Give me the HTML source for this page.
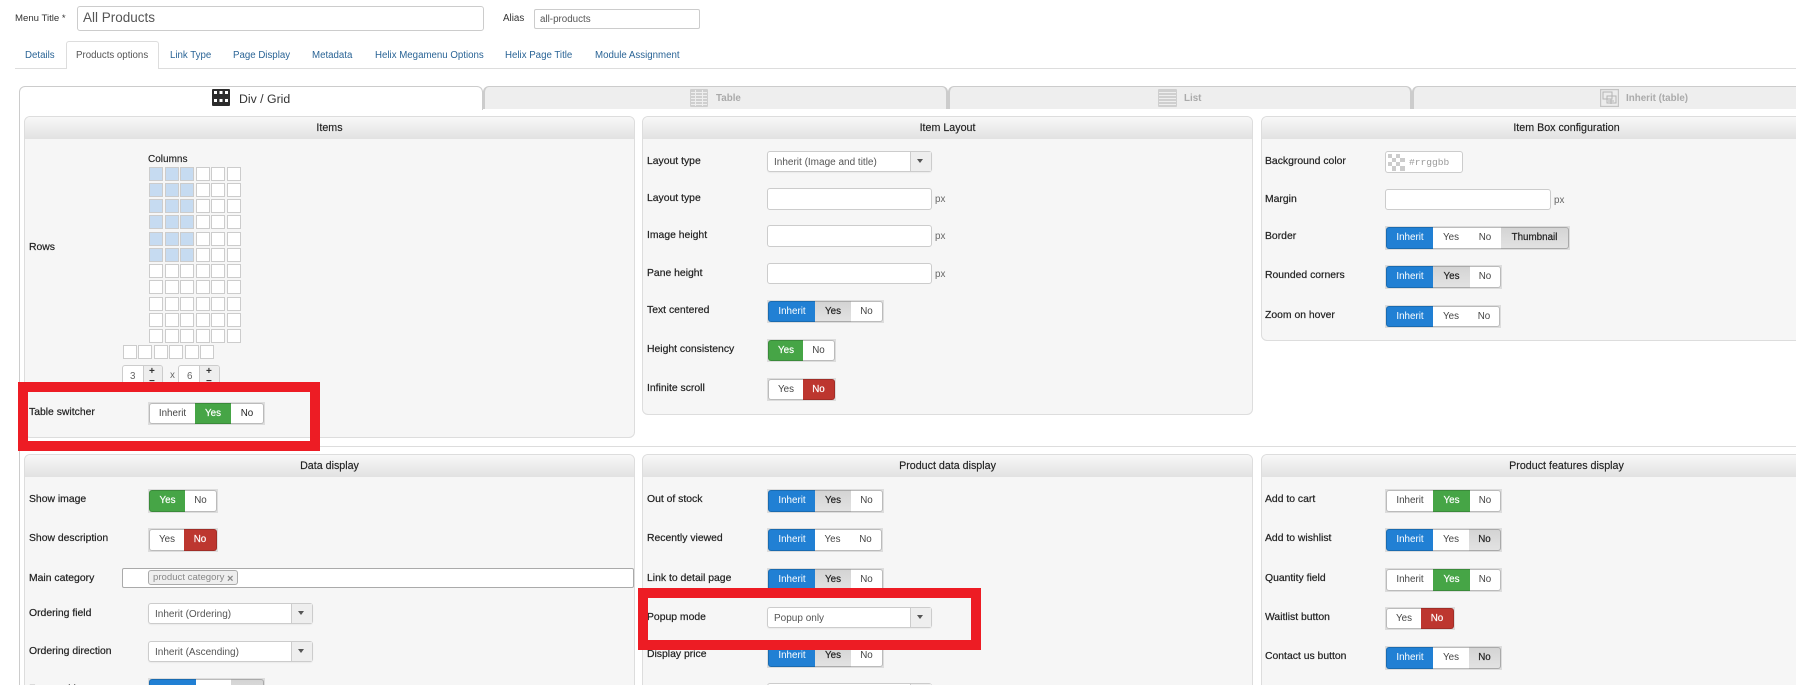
<!DOCTYPE html>
<html>
<head>
<meta charset="utf-8">
<title>All Products</title>
<style>
html,body{margin:0;padding:0;background:#fff;width:1796px;height:685px;overflow:hidden}
body{position:relative;font-family:"Liberation Sans",Arial,sans-serif;color:#333}
div,p,span,i,b{box-sizing:border-box}
.a{position:absolute}
.txt{position:absolute;white-space:nowrap;line-height:14px;font-size:9.8px;margin-top:1px}
.tab{position:absolute;top:49px;white-space:nowrap;line-height:14px;font-size:9.7px;color:#2a6496}
.it{position:absolute;top:86px;height:23px;background:#eee;border:1px solid #ccc;border-bottom:0;border-width:1px 2px 0 2px;border-radius:6px 6px 0 0}
.tt{position:absolute;top:92px;font-size:9.8px;font-weight:bold;color:#aaa;line-height:14px;white-space:nowrap}
.p{position:absolute;background:#f6f6f6;border:1px solid #ddd;border-radius:6px;overflow:hidden}
.h{height:22px;line-height:23px;text-align:center;font-size:10.7px;color:#222;background:linear-gradient(#f8f8f8,#e2e2e2);-webkit-text-stroke:.15px #222;white-space:nowrap}
.l{position:absolute;margin:1px 0 0;white-space:nowrap;font-size:10.4px;line-height:14px;color:#222;-webkit-text-stroke:.2px #222}
.c1{left:29px}.c2{left:647px}.c3{left:1265px}
.t{position:absolute;display:flex;height:23px;padding:1px;background:#ddd}
.t i{display:block;font-style:normal;height:21px;line-height:20px;text-align:center;font-size:9.8px;border:1px solid #bbb;border-left-width:0;border-right-width:0;white-space:nowrap}
.t i:first-child{border-left-width:1px;border-radius:3px 0 0 3px}
.t i:last-child{border-right-width:1px;border-radius:0 3px 3px 0}
.w{background:#fff;color:#444}
.bl{background:#2180d4;color:#fff;border-color:#1a6bb0!important}
.gr{background:#46a546;color:#fff;border-color:#3a8a3a!important;-webkit-text-stroke:.2px #fff}
.rd{background:#bd362f;color:#fff;border-color:#a02d27!important;-webkit-text-stroke:.2px #fff}
.gy{background:linear-gradient(#d4d4d4,#e2e2e2);color:#222;border-color:#aaa!important;-webkit-text-stroke:.2px #222}
.s{position:absolute;height:21px;background:#fff;border:1px solid #ccc;border-radius:3px;box-shadow:0 1px 1px rgba(0,0,0,.05);font-size:10px;line-height:21px;padding-left:6px;color:#555;white-space:nowrap}
.s span{position:absolute;right:0;top:0;width:21px;height:19px;background:#eee;border-left:1px solid #ccc}
.s span:after{content:"";position:absolute;left:6px;top:7px;border:3px solid transparent;border-top:4px solid #555;border-bottom:0}
.in{position:absolute;background:#fff;border:1px solid #ccc;border-radius:3px;height:21px}
.px{position:absolute;font-size:9.8px;color:#666;line-height:14px;margin-top:2px}
.red{position:absolute;border:10px solid #ed1c24;z-index:5}
</style>
</head>
<body>

<!-- top -->
<div class="txt" style="left:15px;top:11px;font-size:9.6px;color:#333">Menu Title *</div>
<div class="a" style="left:77px;top:6px;width:407px;height:25px;background:#fff;border:1px solid #ccc;border-radius:3px;padding-left:5px;font-size:13.5px;line-height:22px;color:#555">All Products</div>
<div class="txt" style="left:503px;top:11px;color:#333">Alias</div>
<div class="a" style="left:534px;top:9px;width:166px;height:20px;background:#fff;border:1px solid #ccc;border-radius:2px;padding-left:5px;font-size:9.8px;line-height:19px;color:#555">all-products</div>

<!-- tabs -->
<div class="a" style="left:15px;top:68px;width:1781px;height:1px;background:#ddd"></div>
<div class="a" style="left:66px;top:41px;width:93px;height:28px;background:#fff;border:1px solid #ddd;border-bottom:0;border-radius:3px 3px 0 0"></div>
<div class="tab" style="left:25px">Details</div>
<div class="tab" style="left:76px;color:#555">Products options</div>
<div class="tab" style="left:170px">Link Type</div>
<div class="tab" style="left:233px">Page Display</div>
<div class="tab" style="left:312px">Metadata</div>
<div class="tab" style="left:375px">Helix Megamenu Options</div>
<div class="tab" style="left:505px">Helix Page Title</div>
<div class="tab" style="left:595px">Module Assignment</div>

<!-- inner tabs -->
<div class="a" style="left:19px;top:109px;width:1px;height:576px;background:#ccc"></div>
<div class="a" style="left:19px;top:86px;width:464px;height:24px;background:#fff;border:1px solid #ccc;border-bottom:0;border-radius:6px 6px 0 0;z-index:1"></div>
<div class="it" style="left:483px;width:465px"></div>
<div class="it" style="left:948px;width:464px"></div>
<div class="it" style="left:1412px;width:400px"></div>

<svg class="a" style="left:212px;top:89px;z-index:2" width="18" height="17" viewBox="0 0 18 17">
<rect width="18" height="17" rx="1" fill="#2c2c2c"/>
<g fill="#fff"><rect x="2" y="2" width="3" height="3"/><rect x="7.5" y="2" width="3" height="3"/><rect x="13" y="2" width="3" height="3"/><rect x="2" y="10" width="3" height="3"/><rect x="7.5" y="10" width="3" height="3"/><rect x="13" y="10" width="3" height="3"/></g>
</svg>
<div class="txt" style="left:239px;top:91px;font-size:12.3px;color:#333;z-index:2">Div / Grid</div>

<svg class="a" style="left:690px;top:89px" width="18" height="18" viewBox="0 0 18 18">
<rect width="18" height="18" rx="1" fill="#cfcfcf"/>
<g fill="#eee"><rect x="1" y="3" width="16" height="1"/><rect x="1" y="6" width="16" height="1"/><rect x="1" y="9" width="16" height="1"/><rect x="1" y="12" width="16" height="1"/><rect x="1" y="15" width="16" height="1"/><rect x="5" y="1" width="1" height="16"/><rect x="12" y="1" width="1" height="16"/></g>
</svg>
<div class="tt" style="left:716px">Table</div>

<svg class="a" style="left:1158px;top:89px" width="19" height="18" viewBox="0 0 19 18">
<rect width="19" height="18" rx="1" fill="#cfcfcf"/>
<g fill="#eee"><rect x="1" y="3" width="17" height="1"/><rect x="1" y="6" width="17" height="1"/><rect x="1" y="9" width="17" height="1"/><rect x="1" y="12" width="17" height="1"/><rect x="1" y="15" width="17" height="1"/></g>
</svg>
<div class="tt" style="left:1184px">List</div>

<svg class="a" style="left:1600px;top:89px" width="19" height="18" viewBox="0 0 19 18">
<rect x=".5" y=".5" width="18" height="17" fill="#ececec" stroke="#c4c4c4" stroke-width="1.4"/>
<rect x="3" y="3" width="9" height="7" fill="none" stroke="#b4b4b4"/>
<rect x="7" y="7" width="9" height="7" fill="none" stroke="#b4b4b4"/>
<path d="M8 12h6M11 10v5" stroke="#b4b4b4" fill="none"/>
</svg>
<div class="tt" style="left:1626px">Inherit (table)</div>

<!-- panels row 1 -->
<div class="p" style="left:24px;top:116px;width:611px;height:322px"><div class="h">Items</div></div>
<div class="p" style="left:642px;top:116px;width:611px;height:299px"><div class="h">Item Layout</div></div>
<div class="p" style="left:1261px;top:116px;width:611px;height:225px"><div class="h">Item Box configuration</div></div>

<!-- hr -->
<div class="a" style="left:20px;top:446px;width:1776px;height:1px;background:#ddd"></div>

<!-- panels row 2 -->
<div class="p" style="left:24px;top:454px;width:611px;height:260px"><div class="h">Data display</div></div>
<div class="p" style="left:642px;top:454px;width:611px;height:260px"><div class="h">Product data display</div></div>
<div class="p" style="left:1261px;top:454px;width:611px;height:260px"><div class="h">Product features display</div></div>

<!-- Items -->
<div class="txt" style="left:148px;top:152px;font-size:10px;color:#222;-webkit-text-stroke:.15px #222">Columns</div>
<p class="l c1" style="top:240px">Rows</p>
<svg class="a" style="left:120px;top:160px" width="125" height="202" viewBox="120 160 125 202">
<defs>
<g id="ra" stroke="#ccc"><g fill="#c6dbf1"><rect x="149.5" y=".5" width="13" height="13"/><rect x="165.5" y=".5" width="13" height="13"/><rect x="180.5" y=".5" width="13" height="13"/></g><g fill="#fff"><rect x="196.5" y=".5" width="13" height="13"/><rect x="211.5" y=".5" width="13" height="13"/><rect x="227.5" y=".5" width="13" height="13"/></g></g>
<g id="rb" stroke="#ccc" fill="#fff"><rect x="149.5" y=".5" width="13" height="13"/><rect x="165.5" y=".5" width="13" height="13"/><rect x="180.5" y=".5" width="13" height="13"/><rect x="196.5" y=".5" width="13" height="13"/><rect x="211.5" y=".5" width="13" height="13"/><rect x="227.5" y=".5" width="13" height="13"/></g>
</defs>
<use href="#ra" y="167"/><use href="#ra" y="183"/><use href="#ra" y="199"/><use href="#ra" y="215"/><use href="#ra" y="232"/><use href="#ra" y="248"/>
<use href="#rb" y="264"/><use href="#rb" y="280"/><use href="#rb" y="297"/><use href="#rb" y="313"/><use href="#rb" y="329"/>
<g stroke="#ccc" fill="#fff"><rect x="123.5" y="345.5" width="13" height="13"/><rect x="138.5" y="345.5" width="13" height="13"/><rect x="154.5" y="345.5" width="13" height="13"/><rect x="169.5" y="345.5" width="13" height="13"/><rect x="185.5" y="345.5" width="13" height="13"/><rect x="200.5" y="345.5" width="13" height="13"/></g>
</svg>

<div class="a" style="left:122px;top:365px;width:41px;height:22px;background:#fff;border:1px solid #ccc;border-radius:3px;overflow:hidden">
<div class="a" style="left:20px;top:0;width:20px;height:22px;background:#eee;border-left:1px solid #ccc"></div>
<div class="txt" style="left:7px;top:3px;color:#666">3</div>
<div class="txt" style="left:26px;top:-2px;font-size:10px;font-weight:bold;color:#333">+</div>
<div class="txt" style="left:26px;top:8px;font-size:10px;font-weight:bold;color:#333">−</div>
</div>
<div class="txt" style="left:170px;top:368px;color:#666">x</div>
<div class="a" style="left:178px;top:365px;width:42px;height:22px;background:#fff;border:1px solid #ccc;border-radius:3px;overflow:hidden">
<div class="a" style="left:20px;top:0;width:21px;height:22px;background:#eee;border-left:1px solid #ccc"></div>
<div class="txt" style="left:8px;top:3px;color:#666">6</div>
<div class="txt" style="left:27px;top:-2px;font-size:10px;font-weight:bold;color:#333">+</div>
<div class="txt" style="left:27px;top:8px;font-size:10px;font-weight:bold;color:#333">−</div>
</div>

<p class="l c1" style="top:405px">Table switcher</p>
<div class="t" style="left:148px;top:402px;width:117px"><i class="w" style="width:46px">Inherit</i><i class="gr" style="width:36px">Yes</i><i class="w" style="width:33px;color:#222">No</i></div>
<div class="red" style="left:18px;top:382px;width:302px;height:69px"></div>

<!-- Item Layout -->
<p class="l c2" style="top:154px">Layout type</p>
<div class="s" style="left:767px;top:151px;width:165px">Inherit (Image and title)<span></span></div>
<p class="l c2" style="top:191px">Layout type</p>
<div class="in" style="left:767px;top:188px;width:165px;height:22px"></div><div class="px" style="left:935px;top:191px">px</div>
<p class="l c2" style="top:228px">Image height</p>
<div class="in" style="left:767px;top:225px;width:165px;height:22px"></div><div class="px" style="left:935px;top:228px">px</div>
<p class="l c2" style="top:266px">Pane height</p>
<div class="in" style="left:767px;top:263px;width:165px"></div><div class="px" style="left:935px;top:266px">px</div>
<p class="l c2" style="top:303px">Text centered</p>
<div class="t" style="left:767px;top:300px;width:117px"><i class="bl" style="width:47px">Inherit</i><i class="gy" style="width:36px">Yes</i><i class="w" style="width:32px">No</i></div>
<p class="l c2" style="top:342px">Height consistency</p>
<div class="t" style="left:767px;top:339px;width:69px"><i class="gr" style="width:35px">Yes</i><i class="w" style="width:32px">No</i></div>
<p class="l c2" style="top:381px">Infinite scroll</p>
<div class="t" style="left:767px;top:378px;width:69px"><i class="w" style="width:35px">Yes</i><i class="rd" style="width:32px">No</i></div>

<!-- Item Box configuration -->
<p class="l c3" style="top:154px">Background color</p>
<div class="in" style="left:1385px;top:151px;width:78px;height:22px"></div>
<svg class="a" style="left:1388px;top:154px" width="17" height="17" viewBox="0 0 17 17">
<rect width="17" height="17" fill="#fff"/>
<g fill="#ccc"><rect width="4" height="4"/><rect x="8" width="4" height="4"/><rect x="4" y="4" width="4" height="4"/><rect x="12" y="4" width="5" height="4"/><rect y="8" width="4" height="4"/><rect x="8" y="8" width="4" height="4"/><rect x="4" y="12" width="4" height="5"/><rect x="12" y="12" width="5" height="5"/></g>
</svg>
<div class="txt" style="left:1409px;top:155px;font-family:'Liberation Mono',monospace;font-size:9.6px;color:#999">#rrggbb</div>
<p class="l c3" style="top:192px">Margin</p>
<div class="in" style="left:1385px;top:189px;width:166px"></div><div class="px" style="left:1554px;top:192px">px</div>
<p class="l c3" style="top:229px">Border</p>
<div class="t" style="left:1385px;top:226px;width:185px;height:24px"><i class="bl" style="width:47px;height:22px">Inherit</i><i class="w" style="width:36px;height:22px">Yes</i><i class="w" style="width:32px;height:22px">No</i><i class="gy" style="width:68px;height:22px">Thumbnail</i></div>
<p class="l c3" style="top:268px">Rounded corners</p>
<div class="t" style="left:1385px;top:265px;width:117px;height:24px"><i class="bl" style="width:47px;height:22px">Inherit</i><i class="gy" style="width:37px;height:22px">Yes</i><i class="w" style="width:31px;height:22px">No</i></div>
<p class="l c3" style="top:308px">Zoom on hover</p>
<div class="t" style="left:1385px;top:305px;width:116px"><i class="bl" style="width:47px">Inherit</i><i class="w" style="width:36px">Yes</i><i class="w" style="width:31px">No</i></div>

<!-- Data display -->
<p class="l c1" style="top:492px">Show image</p>
<div class="t" style="left:148px;top:489px;width:70px;height:24px"><i class="gr" style="width:36px;height:22px">Yes</i><i class="w" style="width:32px;height:22px">No</i></div>
<p class="l c1" style="top:531px">Show description</p>
<div class="t" style="left:148px;top:528px;width:70px;height:24px"><i class="w" style="width:35px;height:22px">Yes</i><i class="rd" style="width:33px;height:22px">No</i></div>
<p class="l c1" style="top:571px">Main category</p>
<div class="a" style="left:122px;top:568px;width:512px;height:20px;background:#fff;border:1px solid #aaa;border-radius:2px"></div>
<div class="a" style="left:148px;top:570px;width:90px;height:15px;background:#eee;border:1px solid #aaa;border-radius:3px;font-size:9.6px;line-height:14px;padding-left:4px;color:#888;white-space:nowrap">product category<span class="a" style="left:78px;top:1px;font-weight:bold;font-size:11px;color:#888">×</span></div>
<p class="l c1" style="top:606px">Ordering field</p>
<div class="s" style="left:148px;top:603px;width:165px">Inherit (Ordering)<span></span></div>
<p class="l c1" style="top:644px">Ordering direction</p>
<div class="s" style="left:148px;top:641px;width:165px">Inherit (Ascending)<span></span></div>
<p class="l c1" style="top:682px">Featured items</p>
<div class="t" style="left:148px;top:678px;width:117px;height:24px"><i class="bl" style="width:47px;height:22px"></i><i class="w" style="width:35px;height:22px"></i><i class="gy" style="width:33px;height:22px"></i></div>

<!-- Product data display -->
<p class="l c2" style="top:492px">Out of stock</p>
<div class="t" style="left:767px;top:489px;width:117px;height:24px"><i class="bl" style="width:47px;height:22px">Inherit</i><i class="gy" style="width:36px;height:22px">Yes</i><i class="w" style="width:32px;height:22px">No</i></div>
<p class="l c2" style="top:531px">Recently viewed</p>
<div class="t" style="left:767px;top:528px;width:116px;height:24px"><i class="bl" style="width:47px;height:22px">Inherit</i><i class="w" style="width:35px;height:22px">Yes</i><i class="w" style="width:32px;height:22px">No</i></div>
<p class="l c2" style="top:571px">Link to detail page</p>
<div class="t" style="left:767px;top:568px;width:117px;height:24px"><i class="bl" style="width:47px;height:22px">Inherit</i><i class="gy" style="width:36px;height:22px">Yes</i><i class="w" style="width:32px;height:22px">No</i></div>
<p class="l c2" style="top:610px">Popup mode</p>
<div class="s" style="left:767px;top:607px;width:165px">Popup only<span></span></div>
<p class="l c2" style="top:647px">Display price</p>
<div class="t" style="left:767px;top:644px;width:117px;height:24px"><i class="bl" style="width:47px;height:22px">Inherit</i><i class="gy" style="width:36px;height:22px">Yes</i><i class="w" style="width:32px;height:22px">No</i></div>
<div class="s" style="left:767px;top:683px;width:165px"><span></span></div>
<div class="red" style="left:638px;top:588px;width:343px;height:62px"></div>

<!-- Product features display -->
<p class="l c3" style="top:492px">Add to cart</p>
<div class="t" style="left:1385px;top:489px;width:117px;height:24px"><i class="w" style="width:47px;height:22px">Inherit</i><i class="gr" style="width:37px;height:22px">Yes</i><i class="w" style="width:31px;height:22px">No</i></div>
<p class="l c3" style="top:531px">Add to wishlist</p>
<div class="t" style="left:1385px;top:528px;width:117px;height:24px"><i class="bl" style="width:47px;height:22px">Inherit</i><i class="w" style="width:36px;height:22px">Yes</i><i class="gy" style="width:32px;height:22px">No</i></div>
<p class="l c3" style="top:571px">Quantity field</p>
<div class="t" style="left:1385px;top:568px;width:117px;height:24px"><i class="w" style="width:47px;height:22px">Inherit</i><i class="gr" style="width:37px;height:22px">Yes</i><i class="w" style="width:31px;height:22px">No</i></div>
<p class="l c3" style="top:610px">Waitlist button</p>
<div class="t" style="left:1385px;top:607px;width:70px"><i class="w" style="width:35px">Yes</i><i class="rd" style="width:33px">No</i></div>
<p class="l c3" style="top:649px">Contact us button</p>
<div class="t" style="left:1385px;top:646px;width:117px;height:24px"><i class="bl" style="width:47px;height:22px">Inherit</i><i class="w" style="width:36px;height:22px">Yes</i><i class="gy" style="width:32px;height:22px">No</i></div>

</body>
</html>
